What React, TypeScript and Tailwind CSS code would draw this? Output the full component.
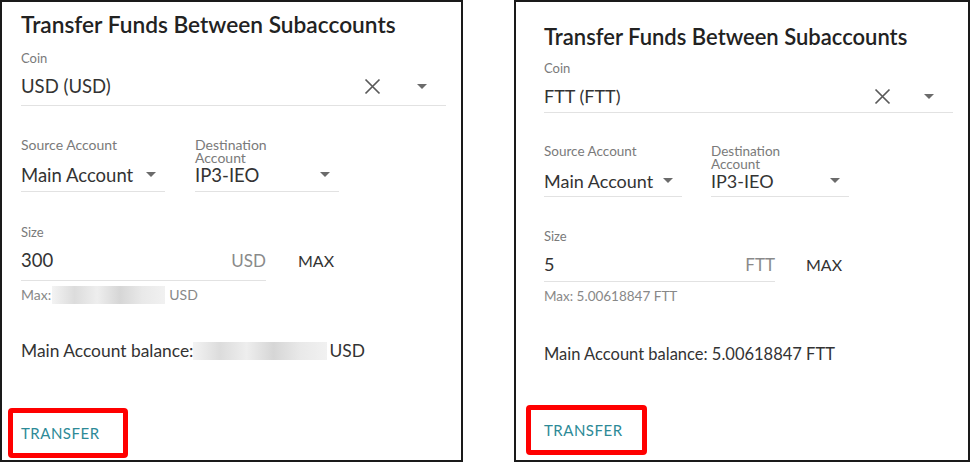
const Caret = () => (
  <svg width="10" height="5" viewBox="0 0 10 5" className="shrink-0">
    <path d="M0 0h10L5 5z" fill="#6b6b6b" />
  </svg>
);

const Clear = () => (
  <svg width="17" height="17" viewBox="0 0 17 17" className="shrink-0">
    <path d="M1.5 1.5l14 14M15.5 1.5l-14 14" stroke="#5a5a5a" strokeWidth="1.7" />
  </svg>
);

const Blur = ({ w }: { w: number }) => (
  <span
    className="inline-block h-[18px] align-middle bg-[linear-gradient(90deg,#f3f3f3,#dcdcdc_20%,#eeeeee_40%,#d6d6d6_60%,#e9e9e9_80%,#f1f1f1)]"
    style={{ width: w }}
  />
);

type PanelProps = {
  coin: string;
  unit: string;
  size: string;
  max?: string;
  balance?: string;
  right?: boolean;
};

const Panel = ({ coin, unit, size, max, balance, right }: PanelProps) => (
  <div
    className={
      right
        ? "w-[456px] h-[462px] border-2 border-[#1a1a1a] bg-white flex flex-col pl-[28px] pr-[15px] pt-[21px]"
        : "w-[463px] h-[462px] border-2 border-[#1a1a1a] bg-white flex flex-col pl-[19px] pr-[15px] pt-[9px]"
    }
  >
    <h2 className={right ? "text-[22px] font-semibold text-[#222] leading-[28px]" : "text-[22.7px] font-semibold text-[#222] leading-[28px]"}>
      Transfer Funds Between Subaccounts
    </h2>

    {/* coin */}
    <div className={right ? "mt-[9px]" : "mt-[11px]"}>
      <div className="text-[13px] text-[#7a7a7a] leading-[16px]">Coin</div>
      <div
        className={
          right
            ? "flex items-center h-[37px] pt-[4px] border-b border-[#e2e2e2] pr-[19px]"
            : "flex items-center h-[40px] pt-[2px] border-b border-[#e2e2e2] pr-[19px]"
        }
      >
        <span className={right ? "text-[18px] text-[#333] flex-1" : "text-[18.5px] text-[#333] flex-1"}>{coin}</span>
        <Clear />
        <span className={right ? "w-[33px]" : "w-[36px]"} />
        <Caret />
      </div>
    </div>

    {/* accounts */}
    <div className={right ? "flex gap-[29px] mt-[31px]" : "flex gap-[30px] mt-[31px]"}>
      {[
        ["Source Account", "Main Account", "whitespace-nowrap"],
        ["Destination Account", "IP3-IEO", "w-[90px]"],
      ].map(([label, value, wrap]) => (
        <div key={label} className={right ? "w-[138px]" : "w-[144px]"}>
          <div
            className={
              (right
                ? "text-[13.5px] text-[#7a7a7a] leading-[13px] h-[27px] pt-[1px] "
                : "text-[14px] text-[#7a7a7a] leading-[13px] h-[27px] pt-[1px] ") + wrap
            }
          >
            {label}
          </div>
          <div
            className={
              right
                ? "flex items-center h-[26px] pb-[6px] border-b border-[#e2e2e2] pr-[9px]"
                : "flex items-center h-[28px] pb-[6px] border-b border-[#e2e2e2] pr-[9px]"
            }
          >
            <span className={right ? "text-[18px] text-[#333] flex-1 leading-[20px]" : "text-[18.5px] text-[#333] flex-1 leading-[22px]"}>
              {value}
            </span>
            <Caret />
          </div>
        </div>
      ))}
    </div>

    {/* size */}
    <div className={right ? "mt-[31px]" : "mt-[32px]"}>
      <div className="text-[13px] text-[#7a7a7a] leading-[16px]">Size</div>
      <div className="flex items-center">
        <div
          className={
            right
              ? "w-[231px] h-[38px] pt-[4px] flex items-center border-b border-[#e2e2e2]"
              : "w-[245px] h-[41px] pt-[2px] flex items-center border-b border-[#e2e2e2]"
          }
        >
          <span className={right ? "text-[18px] text-[#333] flex-1" : "text-[18.5px] text-[#333] flex-1"}>{size}</span>
          <span className="text-[17px] text-[#8a8a8a]">{unit}</span>
        </div>
        <span className={right ? "text-[16px] text-[#333] ml-[31px] mt-[3px]" : "text-[16px] text-[#333] ml-[32px] mt-[1px]"}>MAX</span>
      </div>
      <div className={right ? "text-[13.5px] text-[#888] mt-[6px] leading-[16px] flex items-center" : "text-[14px] text-[#888] mt-[5px] leading-[16px] flex items-center"}>
        {max ? (
          <span>
            Max: {max} {unit}
          </span>
        ) : (
          <>
            <span>Max:</span>
            <span className="ml-[1px]">
              <Blur w={113} />
            </span>
            <span className="ml-[4px]">USD</span>
          </>
        )}
      </div>
    </div>

    <div
      className={
        right
          ? "text-[16.5px] text-[#333] mt-[38px] leading-[24px] flex items-center"
          : "text-[17.4px] text-[#333] mt-[35px] leading-[24px] flex items-center"
      }
    >
      {balance ? (
        <span>
          Main Account balance: {balance} {unit}
        </span>
      ) : (
        <>
          <span>Main Account balance:</span>
          <Blur w={134} />
          <span className="ml-[2px]">USD</span>
        </>
      )}
    </div>

    <div className="flex-1" />
    <div
      className={
        right
          ? "ml-[-18px] mb-[5px] w-[121px] h-[50px] border-[5px] border-[#ff0000] rounded-[4px] flex items-center pl-[13px]"
          : "ml-[-13px] mb-[2px] w-[120px] h-[50px] border-[5px] border-[#ff0000] rounded-[4px] flex items-center pl-[8px]"
      }
    >
      <span className="text-[15px] text-[#2d8a97] tracking-[0.5px]">TRANSFER</span>
    </div>
  </div>
);

export default function App() {
  return (
    <div className="w-[970px] h-[462px] bg-white flex gap-[51px] font-['Lato','Liberation_Sans',sans-serif]">
      <Panel coin="USD (USD)" unit="USD" size="300" />
      <Panel coin="FTT (FTT)" unit="FTT" size="5" max="5.00618847" balance="5.00618847" right />
    </div>
  );
}
